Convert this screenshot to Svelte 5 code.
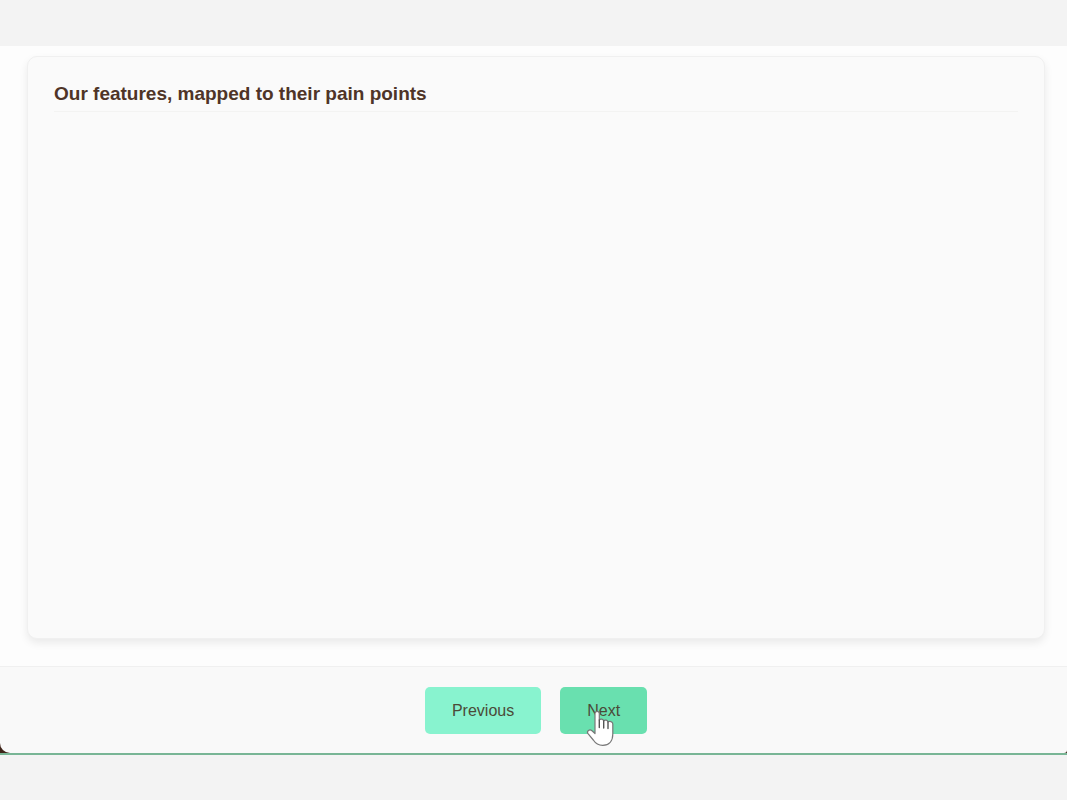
<script>
  let { title = 'Our features, mapped to their pain points' } = $props();
</script>

<div class="page">
  <div class="window">
    <main class="stage">
      <section class="card">
        <h2>{title}</h2>
      </section>
    </main>

    <footer class="nav">
      <button class="btn" type="button">Previous</button>
      <button class="btn btn-hover" type="button">
        Next
        <svg class="pointer" width="28" height="37" viewBox="0 0 28 37" aria-hidden="true">
          <path
            d="M9 3.500C9 .7 13.300.7 13.300 3.500V10c1-1.400 4-1 4.400.8 1.200-1.300 4-.8 4.300 1 1.700-1.100 4.800-.2 4.800 2.200V24c0 7-3.800 11.400-10.100 11.400-4.400 0-7.200-2-9.400-5.400L1.800 23.400c-1.300-2.500 1.800-4.600 4.200-2.700L9 23.500Z"
            fill="#fff"
            stroke="#777"
            stroke-width="1.2"
            stroke-linejoin="round"
          />
          <path d="M13.300 10v7.500M17.700 11v7M22 12v6.500" fill="none" stroke="#555" stroke-width="1.4" stroke-linecap="round" />
        </svg>
      </button>
    </footer>
  </div>
</div>

<style>
  :global(body) {
    margin: 0;
    background: #f3f3f3;
  }

  .page {
    box-sizing: border-box;
    display: flex;
    min-height: 100vh;
    padding: 46px 0 45px;
    font-family: "Liberation Sans", Arial, sans-serif;
    color: #4f3427;
  }

  .window {
    flex: 1;
    display: flex;
    flex-direction: column;
    background: #3f2419;
    border-bottom: 2px solid #78b595;
  }

  .stage {
    flex: 1;
    display: flex;
    padding: 10px 22px 27px 27px;
    background: #fdfdfd;
  }

  .card {
    flex: 1;
    box-sizing: border-box;
    padding: 25px 26px;
    background: #fafafa;
    border: 1px solid #f0f0f0;
    border-radius: 10px;
    box-shadow: 0 4px 8px rgba(0, 0, 0, 0.08);
  }

  h2 {
    margin: 0;
    padding-bottom: 6px;
    border-bottom: 1px solid #f3f3f2;
    font-size: 19px;
    line-height: 23px;
  }

  .nav {
    display: flex;
    justify-content: center;
    gap: 19px;
    padding: 20px 0 19px 5px;
    background: #f9f9f9;
    border-top: 1px solid #f0f0f0;
    border-radius: 0 0 3px 10px;
  }

  .btn {
    position: relative;
    padding: 14px 27px;
    border: 0;
    border-radius: 5px;
    background: #88f3cf;
    color: #4b4a38;
    font: inherit;
    font-size: 16px;
    line-height: 19px;
    cursor: pointer;
  }

  .btn:hover,
  .btn-hover {
    background: #69e0af;
  }

  .pointer {
    position: absolute;
    left: 26px;
    top: 23px;
    pointer-events: none;
  }
</style>
